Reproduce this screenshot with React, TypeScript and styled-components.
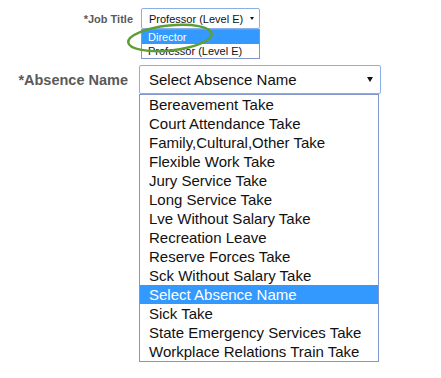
import React from 'react'
import styled, { createGlobalStyle } from 'styled-components'

const GlobalStyle = createGlobalStyle`
  html, body {
    margin: 0;
    padding: 0;
    background: #ffffff;
  }
  body {
    font-family: 'Liberation Sans', Arial, sans-serif;
    color: #000;
  }
`

const Page = styled.div`
  position: relative;
  width: 441px;
  height: 378px;
  overflow: hidden;
  padding-top: 8px;
  box-sizing: border-box;
`

const FieldRow = styled.div<{ $gap: number; $top?: number }>`
  display: flex;
  align-items: center;
  gap: ${({ $gap }) => $gap}px;
  margin-top: ${({ $top }) => $top || 0}px;
`

const Label = styled.label<{ $width: number; $size: number }>`
  width: ${({ $width }) => $width}px;
  flex-shrink: 0;
  text-align: right;
  font-weight: bold;
  font-size: ${({ $size }) => $size}px;
  color: #5a5a5a;
  white-space: nowrap;
`

const SelectWrap = styled.div`
  position: relative;
`

const SelectBox = styled.div<{ $width: number; $height: number; $size: number; $pad: number }>`
  box-sizing: border-box;
  width: ${({ $width }) => $width}px;
  height: ${({ $height }) => $height}px;
  display: flex;
  align-items: center;
  justify-content: space-between;
  padding: 0 ${({ $pad }) => $pad - 2}px 0 ${({ $pad }) => $pad}px;
  border: 1px solid #8aaee6;
  border-radius: 2px;
  background: #fff;
  font-size: ${({ $size }) => $size}px;
  color: #111;
  white-space: nowrap;
`

const Arrow = styled.span<{ $w: number }>`
  width: 0;
  height: 0;
  border-left: ${({ $w }) => $w / 2}px solid transparent;
  border-right: ${({ $w }) => $w / 2}px solid transparent;
  border-top: ${({ $w }) => $w * 0.75}px solid #111;
`

const OptionList = styled.ul<{ $width: number }>`
  position: absolute;
  top: 100%;
  left: 0;
  z-index: 2;
  box-sizing: border-box;
  width: ${({ $width }) => $width}px;
  margin: 0;
  padding: 0;
  list-style: none;
  background: #fff;
  border: 1px solid #8196cf;
`

const OptionItem = styled.li<{ $height: number; $size: number; $pad: number; $selected?: boolean }>`
  height: ${({ $height }) => $height}px;
  line-height: ${({ $height }) => $height}px;
  padding-left: ${({ $pad }) => $pad}px;
  font-size: ${({ $size }) => $size}px;
  white-space: nowrap;
  background: ${({ $selected }) => ($selected ? '#3399ff' : '#fff')};
  color: ${({ $selected }) => ($selected ? '#fff' : '#111')};
`

const Highlight = styled.svg`
  position: absolute;
  left: 124px;
  top: 20px;
  z-index: 3;
  overflow: visible;
`

const jobTitles = ['Director', 'Professor (Level E)']

const absenceNames = [
  'Bereavement Take',
  'Court Attendance Take',
  'Family,Cultural,Other Take',
  'Flexible Work Take',
  'Jury Service Take',
  'Long Service Take',
  'Lve Without Salary Take',
  'Recreation Leave',
  'Reserve Forces Take',
  'Sck Without Salary Take',
  'Select Absence Name',
  'Sick Take',
  'State Emergency Services Take',
  'Workplace Relations Train Take'
]

export default function App() {
  return (
    <>
      <GlobalStyle />
      <Page>
        <FieldRow $gap={8}>
          <Label $width={133} $size={11}>
            *Job Title
          </Label>
          <SelectWrap>
            <SelectBox $width={119} $height={21} $size={11} $pad={7}>
              <span>Professor (Level E)</span>
              <Arrow $w={5} />
            </SelectBox>
            <OptionList $width={119}>
              {jobTitles.map(t => (
                <OptionItem key={t} $height={14} $size={11} $pad={6} $selected={t === 'Director'}>
                  {t}
                </OptionItem>
              ))}
            </OptionList>
          </SelectWrap>
        </FieldRow>

        <FieldRow $gap={11} $top={36}>
          <Label $width={128} $size={14.5}>
            *Absence Name
          </Label>
          <SelectWrap>
            <SelectBox $width={242} $height={29} $size={15} $pad={9}>
              <span>Select Absence Name</span>
              <Arrow $w={7} />
            </SelectBox>
            <OptionList $width={240}>
              {absenceNames.map(n => (
                <OptionItem key={n} $height={19} $size={15} $pad={9} $selected={n === 'Select Absence Name'}>
                  {n}
                </OptionItem>
              ))}
            </OptionList>
          </SelectWrap>
        </FieldRow>

        <Highlight width="96" height="36" viewBox="0 0 96 36">
          <ellipse
            cx="46"
            cy="18"
            rx="42"
            ry="12.5"
            transform="rotate(-6 46 18)"
            fill="none"
            stroke="#5e9e34"
            strokeWidth="2.5"
          />
        </Highlight>
      </Page>
    </>
  )
}
